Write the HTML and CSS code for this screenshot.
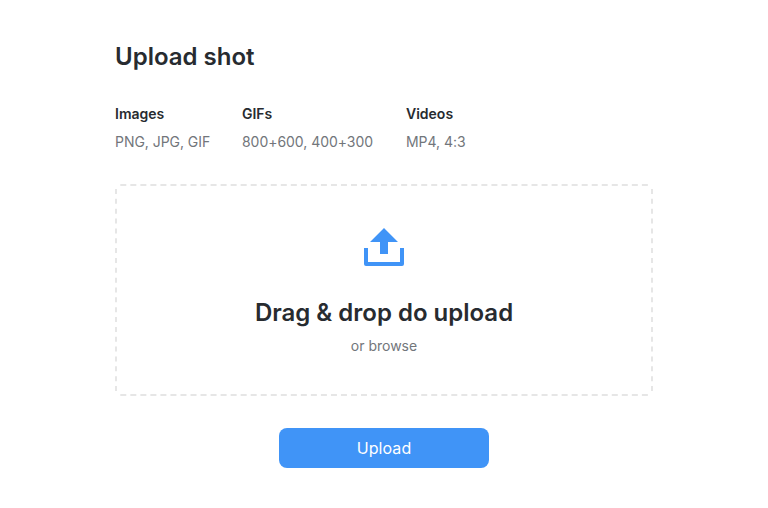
FILE: index.html
```html
<!DOCTYPE html>
<html lang="en">
<head>
<meta charset="utf-8">
<title>Upload shot</title>
<link rel="stylesheet" href="styles.css">
</head>
<body>
<main class="page">
  <h1 class="title">Upload shot</h1>
  <dl class="formats">
    <div class="format images"><dt>Images</dt><dd>PNG, JPG, GIF</dd></div>
    <div class="format gifs"><dt>GIFs</dt><dd>800+600, 400+300</dd></div>
    <div class="format"><dt>Videos</dt><dd>MP4, 4:3</dd></div>
  </dl>
  <section class="dropzone">
    <svg class="outline" width="538" height="212" viewBox="0 0 538 212" fill="none" stroke="#e6e6e6" stroke-width="2" aria-hidden="true">
      <path stroke-dasharray="6 4.03" d="M5.3 1H533.3M5.3 211H533.3"/>
      <path stroke-dasharray="5 4.85" d="M1 5V207.1M537 5V207.1"/>
    </svg>
    <svg class="icon" width="40" height="38" viewBox="0 0 40 38" aria-hidden="true">
      <path fill="#4094f7" d="M20 0 34 14H24V26H16V14H6ZM0 20H4V34H36V20H40V36Q40 38 38 38H2Q0 38 0 36Z"/>
    </svg>
    <h2 class="heading">Drag &amp; drop do upload</h2>
    <p class="browse">or browse</p>
  </section>
  <button class="upload" type="button">Upload</button>
</main>
</body>
</html>
```
FILE: styles.css
```css
* { box-sizing: border-box; margin: 0; padding: 0; }
body { background: #fff; color: #272b30; font-family: Inter, sans-serif; }
.page { width: 538px; margin: 0 auto; padding-top: 41px; }
.title, .heading { font-size: 24px; line-height: 32px; font-weight: 600; }
.formats { display: flex; margin-top: 31px; font-size: 14px; line-height: 20px; }
.format dt { font-weight: 600; }
.format dd { margin-top: 8px; color: #72767b; letter-spacing: -0.04px; }
.images { width: 127px; }
.gifs { width: 164px; }
.dropzone { position: relative; height: 212px; margin-top: 32px; padding-top: 44px; text-align: center; }
.outline { position: absolute; inset: 0; }
.icon { display: block; margin: 0 auto; }
.heading { margin-top: 31px; }
.browse { margin-top: 7px; color: #72767b; font-size: 14px; line-height: 20px; }
.upload { display: block; width: 210px; height: 40px; margin: 32px auto 0; border: 0; border-radius: 8px; background: #4094f7; color: #fff; font: 400 16px/24px Inter, sans-serif; letter-spacing: 0.1px; }
```
